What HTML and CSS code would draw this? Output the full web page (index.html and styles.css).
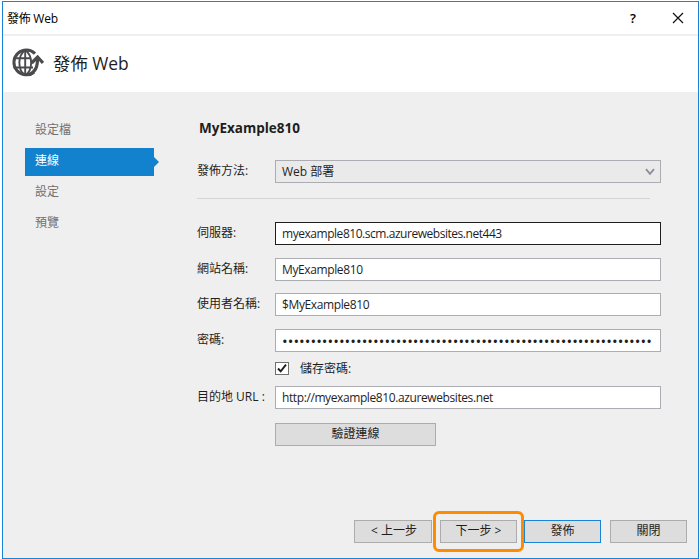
FILE: index.html
```html
<!DOCTYPE html>
<html lang="zh-Hant">
<head>
<meta charset="utf-8">
<title>發佈 Web</title>
<link rel="stylesheet" href="styles.css">
</head>
<body>
<div class="window">
  <div class="titlebar">
    <span class="caption">發佈 Web</span>
    <span class="help">?</span>
    <svg class="close" width="12" height="12" viewBox="0 0 12 12"><path d="M1 1 11 11M11 1 1 11" fill="none" stroke="#111" stroke-width="1.2"/></svg>
  </div>
  <header class="header">
    <svg class="globe" width="33" height="30" viewBox="0 0 33 30" fill="none" stroke="#4b4b4e">
      <path d="M24 5.6A12.4 12.4 0 1 0 23 24.2" stroke-width="3"/>
      <path d="M2.5 10.3H20M2.5 19.5H22M14.2 2.5V27.5" stroke-width="1.9"/>
      <path d="M14 2.5C6.5 7.5 6.5 22 14 27.3M14.5 2.5C22 7.5 22 22 14.5 27.3" stroke-width="1.9"/>
      <path d="M18.5 26.5C24.5 23.5 26.6 19 26.6 10" stroke-width="3.2"/>
      <path d="M20.6 15 26.6 9 32 15" stroke-width="3.2"/>
    </svg>
    <h1 class="heading">發佈 Web</h1>
  </header>
  <div class="content">
    <nav class="steps">
      <a class="step">設定檔</a>
      <a class="step active">連線</a>
      <a class="step">設定</a>
      <a class="step">預覽</a>
    </nav>
    <main class="form">
      <h2 class="profile">MyExample810</h2>
      <div class="row method"><span class="label">發佈方法:</span><div class="field select"><span class="deploy">Web 部署</span>
        <svg width="10" height="8" viewBox="0 0 10 8"><path d="M1 1.2 5 5.8 9 1.2" fill="none" stroke="#8b8b9b" stroke-width="1.8"/></svg></div></div>
      <div class="divider"></div>
      <div class="row server"><span class="label">伺服器:</span><div class="field focused"><span class="server-text">myexample810.scm.azurewebsites.net443</span></div></div>
      <div class="row site"><span class="label">網站名稱:</span><div class="field"><span class="name-text">MyExample810</span></div></div>
      <div class="row user"><span class="label">使用者名稱:</span><div class="field"><span class="name-text">$MyExample810</span></div></div>
      <div class="row password"><span class="label">密碼:</span><div class="field"><span class="dots">•••••••••••••••••••••••••••••••••••••••••••••••••••••••••••••••••</span></div></div>
      <div class="save"><span class="checkbox"><svg width="12" height="11" viewBox="0 0 12 11"><path d="M2 5.5 4.7 8.4 10 1.7" fill="none" stroke="#1e1e1e" stroke-width="1.9"/></svg></span><span>儲存密碼:</span></div>
      <div class="row url"><span class="label">目的地 URL&nbsp;:</span><div class="field"><span class="url-text">http://myexample810.azurewebsites.net</span></div></div>
      <button class="button validate">驗證連線</button>
    </main>
  </div>
  <footer class="footer">
    <button class="button previous">&lt; 上一步</button>
    <div class="highlighted"><button class="button">下一步 &gt;</button></div>
    <button class="button primary">發佈</button>
    <button class="button dismiss">關閉</button>
  </footer>
</div>
</body>
</html>
```
FILE: styles.css
```css
* { box-sizing: border-box; }
body {
  margin: 0;
  padding: 1px 1px 0 2px;
  background: #fff;
  color: #1e1e1e;
  font: 12px/16px "Open Sans", "Noto Sans CJK TC", sans-serif;
}
.window {
  display: flex;
  flex-direction: column;
  width: 697px;
  height: 558px;
  border: 1px solid #1883d7;
  background: #efefef;
  white-space: nowrap;
}
.titlebar {
  display: flex;
  align-items: center;
  height: 32px;
  padding: 0 14px 0 4px;
  background: #fff;
  color: #000;
}
.caption { flex: 1; padding-top: 1px; letter-spacing: -0.25px; }
.help { width: 7px; margin-right: 35px; font-size: 13px; font-weight: 600; }
.header {
  display: flex;
  align-items: center;
  height: 56px;
  margin-top: 2px;
  padding: 0 0 2px 9px;
  background: #fff;
}
.globe { margin-left: -1px; }
.heading { margin: 0 0 0 9px; font-size: 17.4px; font-weight: 400; line-height: 24px; }
.content { display: flex; }
.steps { width: 172px; padding: 25px 0 0 22px; color: #717171; }
.step { display: block; width: 129px; height: 31px; padding: 5px 0 0 10px; }
.step.active {
  position: relative;
  height: 28px;
  margin-bottom: 3px;
  background: #1382ce;
  color: #fff;
}
.active::after {
  content: "";
  position: absolute;
  left: 129px;
  top: 9px;
  border: 5px solid transparent;
  border-left-color: #1382ce;
  border-right: 0;
}
.form { width: 486px; padding: 26px 0 0 22px; }
.profile { height: 20px; margin: 0 0 22px 2px; font-size: 13.5px; line-height: 20px; font-weight: 700; }
.row { display: flex; height: 23px; }
.label { width: 78px; padding-top: 3px; }
.field {
  display: flex;
  align-items: center;
  width: 386px;
  height: 23px;
  padding: 0 6px;
  border: 1px solid #abadb3;
  background: #fff;
}
.select { justify-content: space-between; padding-right: 5px; background: #eaeaea; }
.focused { border-color: #1e1e1e; }
.server-text { letter-spacing: -0.46px; }
.name-text { letter-spacing: -0.38px; }
.url-text { letter-spacing: -0.4px; }
.divider { width: 453px; height: 1px; margin-top: 15px; background: #d4d4d4; }
.server { margin-top: 23px; }
.site { margin-top: 13px; }
.user { margin-top: 12px; }
.password { margin-top: 13px; }
.save { display: flex; align-items: center; height: 13px; margin: 10px 0 11px 78px; }
.checkbox { width: 14px; height: 13px; margin-right: 11px; border: 1px solid #707070; background: #fff; }
.checkbox svg { display: block; }
.dots { font-size: 15px; letter-spacing: 0.05px; }
.button {
  height: 23px;
  padding: 0 0 2px;
  border: 1px solid #acacac;
  background: #ddd;
  color: #1e1e1e;
  font: inherit;
}
.validate { width: 161px; margin: 14px 0 0 78px; }
.footer {
  display: flex;
  height: 41px;
  margin: auto 11px 6px auto;
}
.footer .button { width: 77px; margin-top: 9px; }
.footer .previous { width: 78px; margin-right: 1px; padding-left: 2px; }
.highlighted { width: 91px; height: 41px; border: 3px solid #ff8c00; border-radius: 6px; }
.highlighted .button { margin: 6px 0 0 4px; }
.footer .primary { border-color: #1883d7; }
.footer .dismiss { margin-left: 9px; }
```
